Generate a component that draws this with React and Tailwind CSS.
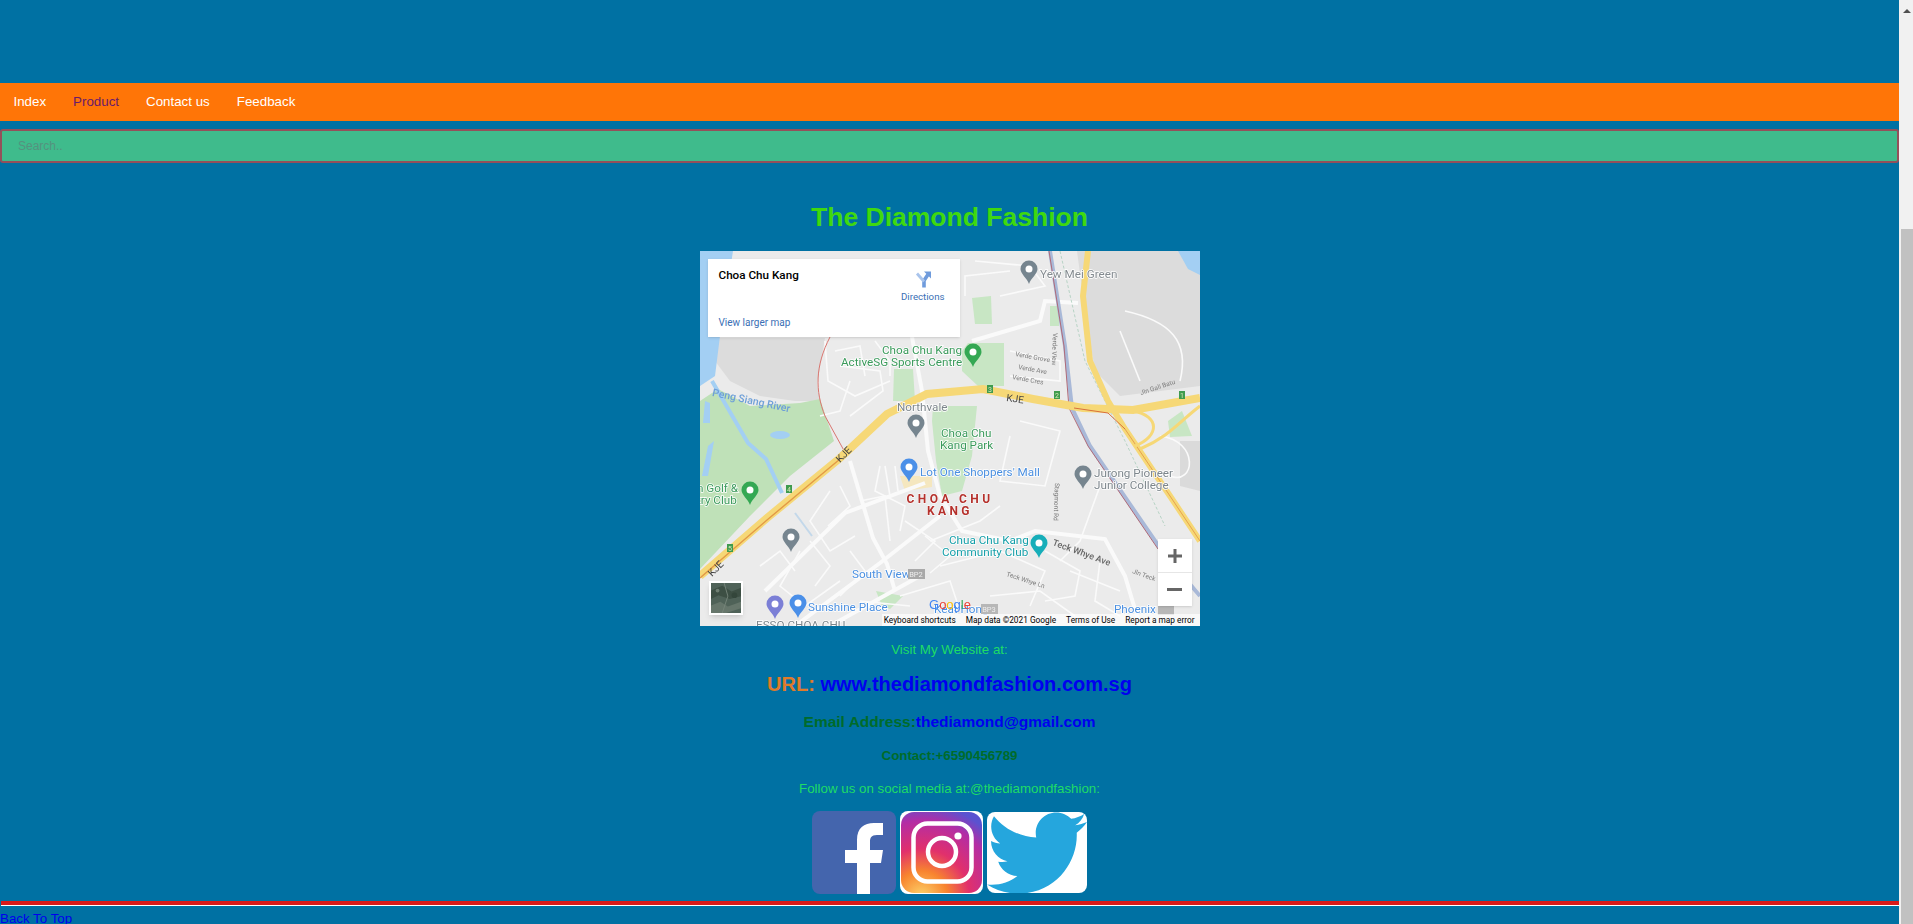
import { FaTwitter } from "react-icons/fa";

const links = ["Index", "Product", "Contact us", "Feedback"];

const areas = [
  { fill: "#dcdcdc", points: "17,87 125,87 117,133 120,150 95,150 60,145 30,130 15,110" },
  { fill: "#dcdcdc", points: "377,0 500,0 500,135 420,145 395,120 385,60" },
  { fill: "#a3cff3", points: "478,0 500,0 500,24 488,18" },
  { fill: "#a3cff3", points: "0,0 33,0 20,85 15,125 0,135" },
  { fill: "#bfe1b8", points: "0,150 18,138 50,155 100,152 120,148 134,190 90,225 50,265 0,318" },
  { fill: "#c8e6c4", points: "233,155 277,155 272,205 262,240 242,245 236,210 232,170" },
  { fill: "#c8e6c4", points: "268,92 304,92 304,135 278,135 262,120 262,100" },
  { fill: "#c8e6c4", points: "194,118 213,118 215,150 193,150" },
  { fill: "#c8e6c4", points: "272,47 291,45 292,73 275,73" },
  { fill: "#c8e6c4", points: "350,55 359,55 359,75 350,75" },
  { fill: "#c8e6c4", points: "468,170 482,160 492,185 470,186" },
  { fill: "#c8e6c4", points: "176,340 203,345 190,358 182,355" },
  { fill: "#f5e7bf", points: "200,225 232,225 232,236 205,240" },
  { fill: "#dadada", points: "480,190 500,190 500,240 480,235" },
];

const whiteRoads = [
  "M212,86 L222,140 L228,200 L240,245 L262,280 L310,290",
  "M150,210 L173,287 L187,313 L195,340",
  "M95,375 L180,312 L240,265",
  "M65,340 L145,262 L225,232",
  "M310,290 L335,280 L405,288 L425,325 L440,375",
  "M272,90 L340,70 L345,50 L378,52",
  "M130,375 L220,325",
];

const thinRoads = [
  "M125,90 L128,130 L155,145 L190,130",
  "M140,115 L180,120 L183,140 L150,165",
  "M135,100 L160,95 L165,125",
  "M150,130 L140,160 L120,165",
  "M175,90 L190,110 L190,125",
  "M180,215 L175,240 L205,255 L200,280",
  "M185,215 L190,245",
  "M195,215 L198,240",
  "M130,240 L110,270 L130,300 L155,285",
  "M140,235 L150,255 L128,275",
  "M100,300 L80,335 L105,355 L140,330",
  "M110,290 L130,315 L115,335",
  "M60,315 L80,300 L95,320",
  "M150,300 L165,320 L140,345",
  "M205,270 L235,290 L215,310",
  "M225,285 L250,305 L230,322",
  "M240,315 L300,300 L345,320 L330,355",
  "M290,345 L340,340 L375,365",
  "M345,300 L380,320 L375,345 L345,350",
  "M400,310 L395,350 L420,365",
  "M310,100 L360,110 L360,130 L310,125",
  "M275,10 L330,15 L345,35 L300,45",
  "M265,45 L265,25 L310,20",
  "M400,235 L380,290 L360,310",
  "M370,320 L420,340",
  "M320,170 L360,180 L345,235 L300,230 L310,185",
  "M230,290 L280,270 L300,255",
  "M160,250 L185,245 L190,290",
  "M200,345 L250,330 L260,360",
  "M160,350 L210,355",
  "M420,80 L440,130",
  "M425,60 C470,70 490,90 480,130",
  "M460,185 C500,190 495,235 470,225",
];

const labels = [
  { x: 340, y: 27, text: "Yew Mei Green", fill: "#848b90" },
  { x: 182, y: 103, text: "Choa Chu Kang", fill: "#3a9a5b" },
  { x: 141, y: 115, text: "ActiveSG Sports Centre", fill: "#3a9a5b" },
  { x: 197, y: 160, text: "Northvale", fill: "#7d868c" },
  { x: 241, y: 186, text: "Choa Chu", fill: "#3a9a5b" },
  { x: 240, y: 198, text: "Kang Park", fill: "#3a9a5b" },
  { x: 220, y: 225, text: "Lot One Shoppers' Mall", fill: "#4a8fe0" },
  { x: 394, y: 226, text: "Jurong Pioneer", fill: "#7d868c" },
  { x: 394, y: 238, text: "Junior College", fill: "#7d868c" },
  { x: -3, y: 241, text: "n Golf &", fill: "#3a9a5b" },
  { x: -3, y: 253, text: "try Club", fill: "#3a9a5b" },
  { x: 249, y: 293, text: "Chua Chu Kang", fill: "#149ea8" },
  { x: 242, y: 305, text: "Community Club", fill: "#149ea8" },
  { x: 152, y: 327, text: "South View", fill: "#4a8fe0" },
  { x: 108, y: 360, text: "Sunshine Place", fill: "#4a8fe0" },
  { x: 414, y: 362, text: "Phoenix", fill: "#4a8fe0" },
  { x: 234, y: 362, text: "Keat Hong", fill: "#4a8fe0" },
  { x: 56, y: 378, text: "ESSO CHOA CHU", fill: "#7d868c" },
];

const smallLabels = [
  { x: 315, y: 105, text: "Verde Grove", rotate: 10 },
  { x: 318, y: 118, text: "Verde Ave", rotate: 10 },
  { x: 312, y: 128, text: "Verde Cres", rotate: 10 },
  { x: 441, y: 144, text: "Jln Gali Batu", rotate: -18 },
  { x: 306, y: 325, text: "Teck Whye Ln", rotate: 18 },
  { x: 432, y: 322, text: "Jln Teck", rotate: 20 },
];

const pins = [
  { x: 329, y: 10, fill: "#76858f" },
  { x: 273, y: 93, fill: "#34a853" },
  { x: 216, y: 164, fill: "#76858f" },
  { x: 209, y: 208, fill: "#4a8fe8" },
  { x: 383, y: 215, fill: "#76858f" },
  { x: 50, y: 231, fill: "#34a853" },
  { x: 91, y: 278, fill: "#76858f" },
  { x: 339, y: 284, fill: "#17aeb9" },
  { x: 75, y: 345, fill: "#7b7fd6" },
  { x: 98, y: 344, fill: "#4a8fe8" },
];

function Pin({ x, y, fill }) {
  return (
    <g transform={`translate(${x} ${y})`}>
      <path d="M0,23 C-2,17 -8.5,13 -8.5,8 A8.5,8.5 0 1 1 8.5,8 C8.5,13 2,17 0,23 Z" fill={fill} />
      <circle cx="0" cy="8" r="3.5" fill="#fff" />
    </g>
  );
}

function Shield({ x, y, n }) {
  return (
    <g>
      <rect x={x} y={y} width="6" height="8" fill="#3f9b4e" />
      <text x={x + 3} y={y + 7} textAnchor="middle" fontSize="7" fill="#d9e8b8" fontFamily="Roboto, sans-serif">{n}</text>
    </g>
  );
}

function MapDrawing() {
  return (
    <svg viewBox="0 0 500 375" className="block w-[500px] h-[375px] blur-[0.4px]" fontFamily="Roboto, sans-serif">
      <rect width="500" height="375" fill="#ebebeb" />
      {areas.map((a) => (
        <polygon key={a.points} points={a.points} fill={a.fill} />
      ))}
      {/* river and ponds */}
      <path d="M12,130 L48,192 L66,208 L82,242" fill="none" stroke="#a3cff3" strokeWidth="4" />
      <path d="M95,262 L112,285" fill="none" stroke="#c3d8ea" strokeWidth="2" />
      <ellipse cx="80" cy="184" rx="10" ry="4" fill="#a3cff3" />
      <path d="M14,190 L8,225 L2,225 L8,195 Z" fill="#a3cff3" />
      <path d="M5,150 L10,152 L10,172 L3,172 Z" fill="#a3cff3" />

      {thinRoads.map((d) => (
        <path key={d} d={d} fill="none" stroke="#fafafa" strokeWidth="1.6" />
      ))}
      {whiteRoads.map((d) => (
        <path key={d} d={d} fill="none" stroke="#fafafa" strokeWidth="4" />
      ))}

      {/* planning area line */}
      <path d="M130,86 C115,115 115,140 125,165 L147,205" fill="none" stroke="#d9756f" strokeWidth="1" />

      {/* rail and canal */}
      <path d="M350,0 L365,95 L372,157 L390,195 L462,300 L500,345" fill="none" stroke="#a9b9d8" strokeWidth="4" />
      <path d="M349,0 L364,95 L369,157 L388,195 L458,298" fill="none" stroke="#b06a78" strokeWidth="1" />
      <path d="M360,0 L385,110 L425,190 L465,275" fill="none" stroke="#a9cdbb" strokeWidth="0.8" strokeDasharray="3 2" />

      {/* expressways */}
      <path d="M388,0 L383,45 L390,110 L408,150 L425,178 L470,245 L500,290" fill="none" stroke="#f6d877" strokeWidth="6" />
      <path d="M425,178 L470,245 L500,290" fill="none" stroke="#e6a24c" strokeWidth="1" />
      <path d="M0,325 L67,267 L140,207 L187,163 L227,143 L283,138 L333,148 L383,157 L433,159 L500,147" fill="none" stroke="#f6d877" strokeWidth="8" />
      <path d="M0,327 L67,269 L140,208" fill="none" stroke="#e39a45" strokeWidth="1.4" />
      <path d="M433,160 C460,165 460,185 435,195" fill="none" stroke="#f6d877" strokeWidth="3" />
      <path d="M440,198 C470,185 480,170 500,155" fill="none" stroke="#f6d877" strokeWidth="3" />
      <path d="M374,157 L408,162 L425,178" fill="none" stroke="#d9703c" strokeWidth="1" />

      <Shield x={287} y={134} n="3" />
      <Shield x={354} y={140} n="2" />
      <Shield x={479} y={140} n="1" />
      <Shield x={86} y={234} n="4" />
      <Shield x={27} y={293} n="5" />

      {pins.map((p) => (
        <Pin key={`${p.x}-${p.y}`} {...p} />
      ))}

      {labels.map((l) => (
        <text key={l.text} x={l.x} y={l.y} fontSize="11.7" fill={l.fill} stroke="#ffffff" strokeWidth="1.5" paintOrder="stroke">
          {l.text}
        </text>
      ))}
      {smallLabels.map((l) => (
        <text key={l.text} x={l.x} y={l.y} fontSize="6.5" fill="#7b7b7b" transform={`rotate(${l.rotate} ${l.x} ${l.y})`}>
          {l.text}
        </text>
      ))}

      <text x="14" y="145" fontSize="10.5" fontWeight="500" fill="#6d9fd8" transform="rotate(12 14 134)">Peng Siang River</text>
      <text x="306" y="150" fontSize="10" fill="#444" transform="rotate(8 306 150)">KJE</text>
      <text x="140" y="212" fontSize="10" fill="#444" transform="rotate(-45 140 212)">KJE</text>
      <text x="12" y="326" fontSize="10" fill="#444" transform="rotate(-45 12 326)">KJE</text>
      <text x="352" y="294" fontSize="9" fontWeight="500" fill="#666" transform="rotate(20 352 294)">Teck Whye Ave</text>
      <text x="355" y="232" fontSize="6.5" fill="#777" transform="rotate(92 355 232)">Stagmont Rd</text>
      <text x="353" y="82" fontSize="6.5" fill="#777" transform="rotate(92 353 82)">Verde View</text>

      <text x="250" y="252" textAnchor="middle" fontSize="12" fontWeight="700" letterSpacing="3.4" fill="#b5312c" stroke="#fff" strokeWidth="1" paintOrder="stroke">CHOA CHU</text>
      <text x="250" y="264" textAnchor="middle" fontSize="12" fontWeight="700" letterSpacing="3.4" fill="#b5312c" stroke="#fff" strokeWidth="1" paintOrder="stroke">KANG</text>

      <rect x="208" y="318" width="17" height="10" fill="#a9a9a9" />
      <text x="216" y="326" textAnchor="middle" fontSize="7.5" fill="#eee">BP2</text>
      <rect x="281" y="353" width="17" height="10" fill="#b7b7b7" />
      <text x="289" y="361" textAnchor="middle" fontSize="7.5" fill="#eee">BP3</text>
      <rect x="458" y="354" width="16" height="10" fill="#b7b7b7" />

      <text x="229" y="358" fontSize="13" fontFamily="'Liberation Sans', sans-serif">
        <tspan fill="#4285f4">G</tspan>
        <tspan fill="#ea4335">o</tspan>
        <tspan fill="#fbbc05">o</tspan>
        <tspan fill="#4285f4">g</tspan>
        <tspan fill="#34a853">l</tspan>
        <tspan fill="#ea4335">e</tspan>
      </text>
    </svg>
  );
}

function SatelliteThumb() {
  return (
    <svg viewBox="0 0 32 32" className="block h-full w-full">
      <rect width="32" height="32" fill="#4f6258" />
      <path d="M0,8 L12,3 L22,9 L32,5 V14 L20,17 L8,13 L0,17 Z" fill="#3d4f44" />
      <path d="M0,24 L10,20 L18,25 L32,20 V27 L16,32 H0 Z" fill="#66766b" />
      <path d="M14,0 L18,14 L12,32" fill="none" stroke="#75847a" strokeWidth="1" />
      <circle cx="25" cy="13" r="3" fill="#34463b" />
      <circle cx="7" cy="8" r="2" fill="#6f7f73" />
    </svg>
  );
}

function GoogleMap() {
  return (
    <div className="relative w-[500px] h-[375px] overflow-hidden font-['Roboto',sans-serif]">
      <MapDrawing />

      <div className="absolute left-2 top-2 flex w-[252px] h-[78px] justify-between bg-white pl-[11px] pr-[15px] pt-[8px] pb-[8px] shadow-sm">
        <div className="flex flex-col justify-between">
          <span className="text-[11.7px] font-medium leading-[16px] text-black">Choa Chu Kang</span>
          <span className="text-[10px] leading-[12px] text-[#3a6fb5]">View larger map</span>
        </div>
        <div className="flex flex-col items-center">
          <svg width="18" height="18" viewBox="0 0 18 17" fill="none" className="mt-[3px]">
            <path d="M10,17 V10 L14,4" stroke="#6f9bdc" strokeWidth="3.6" />
            <path d="M10,11 L3,3" stroke="#a9c4ec" strokeWidth="2.8" />
            <path d="M10,1 H17 V8 Z" fill="#6f9bdc" />
          </svg>
          <span className="mt-[3px] text-[9.7px] leading-[12px] text-[#3a6fb5]">Directions</span>
        </div>
      </div>

      <div className="absolute left-[9px] top-[330px] h-[34px] w-[34px] border-2 border-white shadow-md">
        <SatelliteThumb />
      </div>

      <div className="absolute left-[458px] top-[288px] flex w-[34px] h-[67px] flex-col bg-white shadow-sm">
        <div className="flex flex-1 items-center justify-center border-b border-[#e6e6e6]">
          <svg width="16" height="16" viewBox="0 0 16 16">
            <path d="M6.5,1 H9.5 V6.5 H15 V9.5 H9.5 V15 H6.5 V9.5 H1 V6.5 H6.5 Z" fill="#666" />
          </svg>
        </div>
        <div className="flex flex-1 items-center justify-center">
          <div className="h-[3px] w-[15px] bg-[#666]" />
        </div>
      </div>

      <div className="absolute bottom-0 right-0 flex h-[12px] items-center gap-[10px] bg-white/70 pl-[2px] pr-[5px] text-[8.3px] leading-[12px] text-black">
        <span>Keyboard shortcuts</span>
        <span>Map data ©2021 Google</span>
        <span>Terms of Use</span>
        <span>Report a map error</span>
      </div>
    </div>
  );
}

function FacebookIcon() {
  return (
    <svg width="84" height="83" viewBox="0 0 84 83" className="block">
      <rect width="84" height="83" rx="8" fill="#4465ad" />
      <path d="M45,83 V52 H33 V39 H45 V29 C45,17 52,12 62,12 H71 V24 H65 C59,24 58,27 58,31 V39 H71 L69,52 H58 V83 Z" fill="#fff" />
    </svg>
  );
}

function InstagramIcon() {
  return (
    <svg width="83" height="83" viewBox="0 0 83 83" className="block">
      <defs>
        <radialGradient id="igGlow" cx="0.25" cy="1.05" r="1.15">
          <stop offset="0" stopColor="#fdd56b" />
          <stop offset="0.28" stopColor="#f8842f" />
          <stop offset="0.52" stopColor="#e1306c" />
          <stop offset="0.82" stopColor="#b32da5" />
          <stop offset="1" stopColor="#5a52d0" />
        </radialGradient>
      </defs>
      <rect width="83" height="83" rx="8" fill="#fff" />
      <rect x="1" y="1" width="81" height="81" rx="13" fill="url(#igGlow)" />
      <rect x="13.5" y="12.5" width="58" height="58" rx="14" fill="none" stroke="#fff" strokeWidth="4.5" />
      <circle cx="42" cy="41" r="14" fill="none" stroke="#fff" strokeWidth="4.5" />
      <circle cx="58" cy="25" r="3.6" fill="#fff" />
    </svg>
  );
}

function TwitterIcon() {
  return (
    <div className="flex h-[81px] w-[100px] items-center justify-center overflow-hidden rounded-lg bg-white">
      <FaTwitter size={100} color="#25a6dd" className="shrink-0" />
    </div>
  );
}

function Scrollbar() {
  return (
    <div className="flex w-[14px] shrink-0 flex-col bg-[#f1f1f1] pl-[2px]">
      <div className="flex h-[229px] justify-center pt-[9px]">
        <div className="h-0 w-0 border-x-[4px] border-b-[4px] border-x-transparent border-b-[#505050]" />
      </div>
      <div className="flex-1 bg-[#c1c1c1]" />
    </div>
  );
}

export default function App() {
  return (
    <div className="flex h-[924px] overflow-hidden bg-[#0071a3] font-['Liberation_Sans',Arial,sans-serif]">
      <main className="min-w-0 flex-1">
        <nav className="mt-[83px] flex h-[38px] items-center bg-[#ff7507] pb-px text-[13.33px]">
          {links.map((link) => (
            <a
              key={link}
              href="#"
              className={`px-[13.5px] ${link === "Product" ? "text-[#6a1b6a]" : "text-white"}`}
            >
              {link}
            </a>
          ))}
        </nav>

        <input
          type="text"
          placeholder="Search.."
          className="mt-2 block h-[34px] w-full rounded-[3px] border-2 border-[#94505a] bg-[#3fbb8c] px-[16px] text-[12px] placeholder:text-[#55927f]"
        />

        <div className="flex flex-col items-center">
          <h1 className="mt-[36px] text-[26.5px] leading-[36px] font-bold text-[#3fd80f]">The Diamond Fashion</h1>
          <div className="mt-[16px]">
            <GoogleMap />
          </div>
          <p className="mt-[16px] text-[13.33px] leading-[16px] text-[#1fdc66]">Visit My Website at:</p>
          <p className="mt-[13px] text-[20px] leading-[26px] font-bold text-[#e07b2a]">
            URL: <a href="#" className="text-[#0000ee]">www.thediamondfashion.com.sg</a>
          </p>
          <p className="mt-[15px] text-[15.5px] leading-[20px] font-bold text-[#006b2a]">
            Email Address:<a href="#" className="text-[#0000ee]">thediamond@gmail.com</a>
          </p>
          <p className="mt-[16px] text-[13.33px] leading-[16px] font-bold text-[#006b2a]">Contact:+6590456789</p>
          <p className="mt-[17px] text-[13.33px] leading-[16px] text-[#1fdc66]">Follow us on social media at:@thediamondfashion:</p>
          <div className="mt-[14px] flex items-center gap-[4px]">
            <FacebookIcon />
            <InstagramIcon />
            <TwitterIcon />
          </div>
        </div>

        <div className="mt-[7px] ml-px border-b border-white">
          <div className="h-1 bg-[#d81a1a]" />
        </div>
        <a href="#" className="mt-[5px] block text-[13.33px] leading-[16px] text-[#0000ee] underline">Back To Top</a>
      </main>
      <Scrollbar />
    </div>
  );
}
